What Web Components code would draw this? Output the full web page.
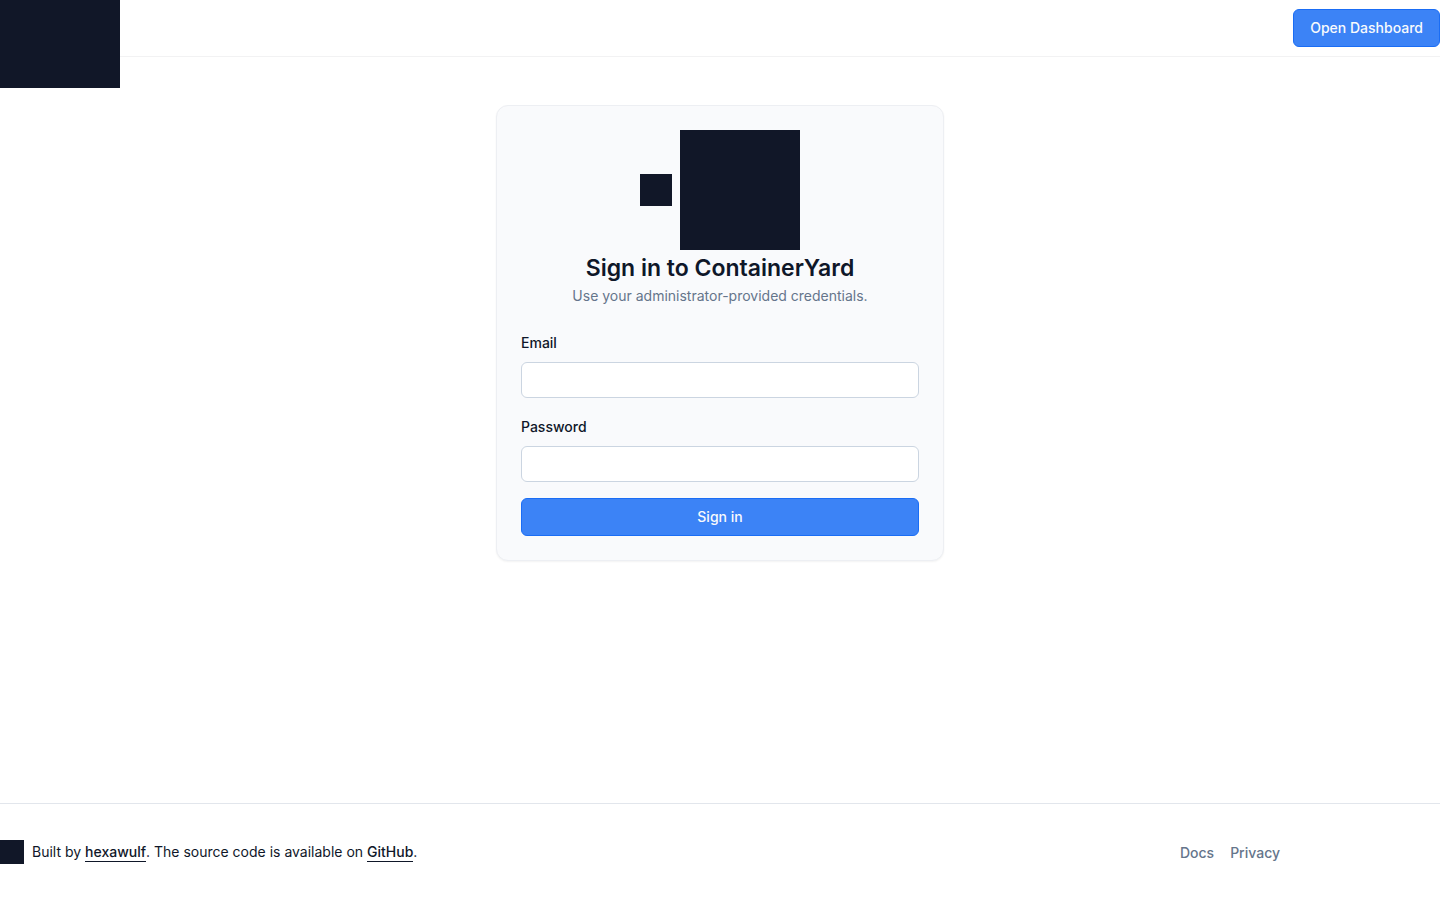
<!DOCTYPE html>
<html lang="en">
<head>
<meta charset="utf-8">
<meta name="viewport" content="width=device-width, initial-scale=1">
<title>Sign in to ContainerYard</title>
<style>
  :root {
    --ink: #0f1729;
    --muted: #65758b;
    --primary: #3c83f6;
    --primary-border: #1a6df5;
    --card: #f9fafc;
    --input-border: #cbd5e1;
  }
  body {
    margin: 0;
    font: 14px/20px Inter, sans-serif;
    color: var(--ink);
    background: #fff;
  }
</style>
</head>
<body>
<cy-app></cy-app>
<script>
  class BaseElement extends HTMLElement {
    connectedCallback() {
      if (this.shadowRoot) return;
      this.attachShadow({ mode: 'open' }).innerHTML =
        '<style>*{box-sizing:border-box}</style>' + this.render();
    }
  }

  // Solid square mark; its size comes from the "size" attribute.
  customElements.define('cy-mark', class extends BaseElement {
    render() {
      const size = Number(this.getAttribute('size')) || 24;
      return `
        <style>
          :host { display: block; flex: none; }
          svg { display: block; }
        </style>
        <svg width="${size}" height="${size}" viewBox="0 0 10 10" aria-hidden="true">
          <rect width="10" height="10" fill="#111728"/>
        </svg>`;
    }
  });

  customElements.define('cy-button', class extends BaseElement {
    render() {
      return `
        <style>
          :host { display: block; }
          button {
            width: 100%;
            padding: 8px 16px;
            border: 1px solid var(--primary-border);
            border-radius: 6px;
            background: var(--primary);
            color: #f8fafc;
            font: inherit;
            font-weight: 500;
            cursor: pointer;
          }
        </style>
        <button type="button"><slot></slot></button>`;
    }
  });

  customElements.define('cy-field', class extends BaseElement {
    render() {
      const type = this.getAttribute('type') || 'text';
      return `
        <style>
          :host { display: grid; gap: 8px; }
          .caption { font-size: 16px; line-height: 24px; }
          label { font-size: 14px; line-height: 14px; font-weight: 500; }
          input {
            width: 100%;
            height: 36px;
            padding: 0 12px;
            border: 1px solid var(--input-border);
            border-radius: 6px;
            background: #fff;
            color: inherit;
            font: inherit;
          }
        </style>
        <div class="caption"><label for="control">${this.getAttribute('label')}</label></div>
        <input id="control" type="${type}">`;
    }
  });

  customElements.define('cy-header', class extends BaseElement {
    render() {
      return `
        <style>
          :host { display: block; border-bottom: 1px solid #f2f2f3; }
          header {
            display: flex;
            align-items: center;
            justify-content: space-between;
            height: 56px;
          }
        </style>
        <header>
          <cy-mark size="120"></cy-mark>
          <cy-button>Open Dashboard</cy-button>
        </header>`;
    }
  });

  customElements.define('cy-login-card', class extends BaseElement {
    render() {
      return `
        <style>
          :host {
            display: block;
            width: 100%;
            max-width: 448px;
            padding: 24px;
            border: 1px solid #edeff3;
            border-radius: 12px;
            background: var(--card);
            box-shadow: 0 1px 2px rgba(0, 0, 0, .05);
            box-sizing: border-box;
          }
          .brand { display: flex; align-items: center; justify-content: center; gap: 8px; }
          h1 { margin: 0; font-size: 23px; line-height: 36px; font-weight: 600; text-align: center; }
          p { margin: 0; color: var(--muted); text-align: center; }
          form { display: grid; gap: 16px; margin-top: 24px; }
        </style>
        <div class="brand">
          <cy-mark size="32"></cy-mark>
          <cy-mark size="120"></cy-mark>
        </div>
        <h1>Sign in to ContainerYard</h1>
        <p>Use your administrator-provided credentials.</p>
        <form>
          <cy-field label="Email" type="email"></cy-field>
          <cy-field label="Password" type="password"></cy-field>
          <cy-button>Sign in</cy-button>
        </form>`;
    }
  });

  customElements.define('cy-footer', class extends BaseElement {
    render() {
      return `
        <style>
          :host { display: block; border-top: 1px solid #e2e6ec; }
          footer {
            display: flex;
            align-items: center;
            justify-content: space-between;
            max-width: 1280px;
            height: 96px;
          }
          .credit { display: flex; align-items: center; gap: 8px; }
          p { margin: 0; }
          a { color: inherit; font-size: 14px; font-weight: 500; text-decoration: none; }
          p a { padding-bottom: 1px; border-bottom: 1px solid; }
          ul {
            display: flex;
            gap: 16px;
            margin: 0;
            padding: 0;
            list-style: none;
            color: var(--muted);
            font-size: 16px;
            line-height: 24px;
          }
        </style>
        <footer>
          <div class="credit">
            <cy-mark size="24"></cy-mark>
            <p>Built by <a href="#hexawulf">hexawulf</a>. The source code is available on <a href="#github">GitHub</a>.</p>
          </div>
          <nav>
            <ul>
              <li><a href="#docs">Docs</a></li>
              <li><a href="#privacy">Privacy</a></li>
            </ul>
          </nav>
        </footer>`;
    }
  });

  customElements.define('cy-app', class extends BaseElement {
    render() {
      return `
        <style>
          :host { display: flex; flex-direction: column; min-height: 100vh; }
          main { flex: 1; display: flex; align-items: flex-start; justify-content: center; padding: 48px 16px; }
        </style>
        <cy-header></cy-header>
        <main><cy-login-card></cy-login-card></main>
        <cy-footer></cy-footer>`;
    }
  });
</script>
</body>
</html>
